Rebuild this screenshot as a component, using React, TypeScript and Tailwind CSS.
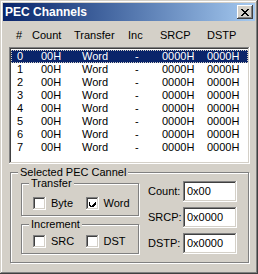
const raised =
  'shadow-[inset_-1px_-1px_#404040,inset_1px_1px_#fff,inset_-2px_-2px_#808080,inset_2px_2px_#d4d0c8]'
const sunken =
  'shadow-[inset_-1px_-1px_#fff,inset_1px_1px_#808080,inset_-2px_-2px_#d4d0c8,inset_2px_2px_#404040]'

const rows = Array.from({ length: 8 }, (_, i) => i)

function CheckBox({ checked, label }: { checked?: boolean; label: string }) {
  return (
    <div className="flex w-[55px] items-center">
      <span className={`grid h-[13px] w-[13px] place-items-center bg-white ${sunken}`}>
        {checked && (
          <svg width="7" height="7" viewBox="0 0 7 7" shapeRendering="crispEdges">
            <path d="M0 2h1v3h1v1h1v-1h1v-1h1v-1h1v-1h1v3h-1v1h-1v1h-1v1h-2v-1h-1v-1h-1z" fill="#000" />
          </svg>
        )}
      </span>
      <span className="ml-[5px]">{label}</span>
    </div>
  )
}

function GroupBox({
  title,
  className,
  children,
}: {
  title: string
  className: string
  children: React.ReactNode
}) {
  return (
    <div
      className={`relative border border-[#808080] shadow-[inset_1px_1px_#fff,1px_1px_#fff] ${className}`}
    >
      <span className="absolute -top-[7px] left-[7px] bg-[#d4d0c8] px-[2px] leading-[13px]">
        {title}
      </span>
      {children}
    </div>
  )
}

function Field({ label, value }: { label: string; value: string }) {
  return (
    <div className="flex h-[21px] items-center">
      <span className="w-[35px]">{label}</span>
      <div className={`flex h-[21px] w-[54px] items-center bg-white pl-[4px] ${sunken}`}>
        {value}
      </div>
    </div>
  )
}

export default function App() {
  return (
    <div
      className={`flex h-[274px] w-[258px] flex-col bg-[#d4d0c8] p-[3px] font-['Liberation_Sans',Arial,sans-serif] text-[11px] text-black shadow-[inset_-1px_-1px_#404040,inset_1px_1px_#d4d0c8,inset_-2px_-2px_#808080,inset_2px_2px_#fff]`}
    >
      <div className="flex h-[18px] items-center justify-between bg-gradient-to-r from-[#0a246a] to-[#a6caf0] pl-[2px] pr-[2px]">
        <span className="text-[12px] font-bold text-white">PEC Channels</span>
        <button
          type="button"
          className={`grid h-[14px] w-[16px] place-items-center bg-[#d4d0c8] ${raised}`}
        >
          <svg width="8" height="7" viewBox="0 0 8 7" shapeRendering="crispEdges">
            <path
              d="M0 0h2v1h1v1h2v-1h1v-1h2v1h-1v1h-1v1h-1v1h1v1h1v1h1v1h-2v-1h-1v-1h-2v1h-1v1h-2v-1h1v-1h1v-1h1v-1h-1v-1h-1v-1h-1z"
              fill="#000"
            />
          </svg>
        </button>
      </div>

      <div className="flex flex-col pl-[6px]">
        <div className="mt-[8px] grid h-[13px] grid-cols-[16px_42px_54px_32px_47px_1fr] pl-[7px] leading-[13px]">
          <span>#</span>
          <span>Count</span>
          <span>Transfer</span>
          <span>Inc</span>
          <span>SRCP</span>
          <span>DSTP</span>
        </div>

        <div className={`mt-[5px] h-[117px] w-[241px] bg-white p-[2px] pt-[3px] ${sunken}`}>
          {rows.map((i) => (
            <div
              key={i}
              className={`grid h-[13px] grid-cols-[24px_41px_53px_27px_45px_1fr] pl-[6px] leading-[13px] ${
                i === 0 ? 'bg-[#0a246a] text-white outline-1 -outline-offset-1 outline-dotted outline-[#d4d0c8]' : ''
              }`}
            >
              <span>{i}</span>
              <span>00H</span>
              <span>Word</span>
              <span>-</span>
              <span>0000H</span>
              <span>0000H</span>
            </div>
          ))}
        </div>

        <GroupBox title="Selected PEC Cannel" className="ml-[1px] mt-[8px] flex h-[91px] w-[239px]">
          <div className="flex flex-col pl-[10px] pt-[10px]">
            <GroupBox title="Transfer" className="flex h-[33px] w-[118px] items-start pl-[11px] pt-[11px]">
              <CheckBox label="Byte" />
              <CheckBox label="Word" checked />
            </GroupBox>
            <GroupBox title="Increment" className="mt-[8px] flex h-[30px] w-[118px] items-start pl-[11px] pt-[8px]">
              <CheckBox label="SRC" />
              <CheckBox label="DST" />
            </GroupBox>
          </div>
          <div className="ml-[9px] flex flex-col gap-[5px] pt-[8px]">
            <Field label="Count:" value="0x00" />
            <Field label="SRCP:" value="0x0000" />
            <Field label="DSTP:" value="0x0000" />
          </div>
        </GroupBox>
      </div>
    </div>
  )
}
